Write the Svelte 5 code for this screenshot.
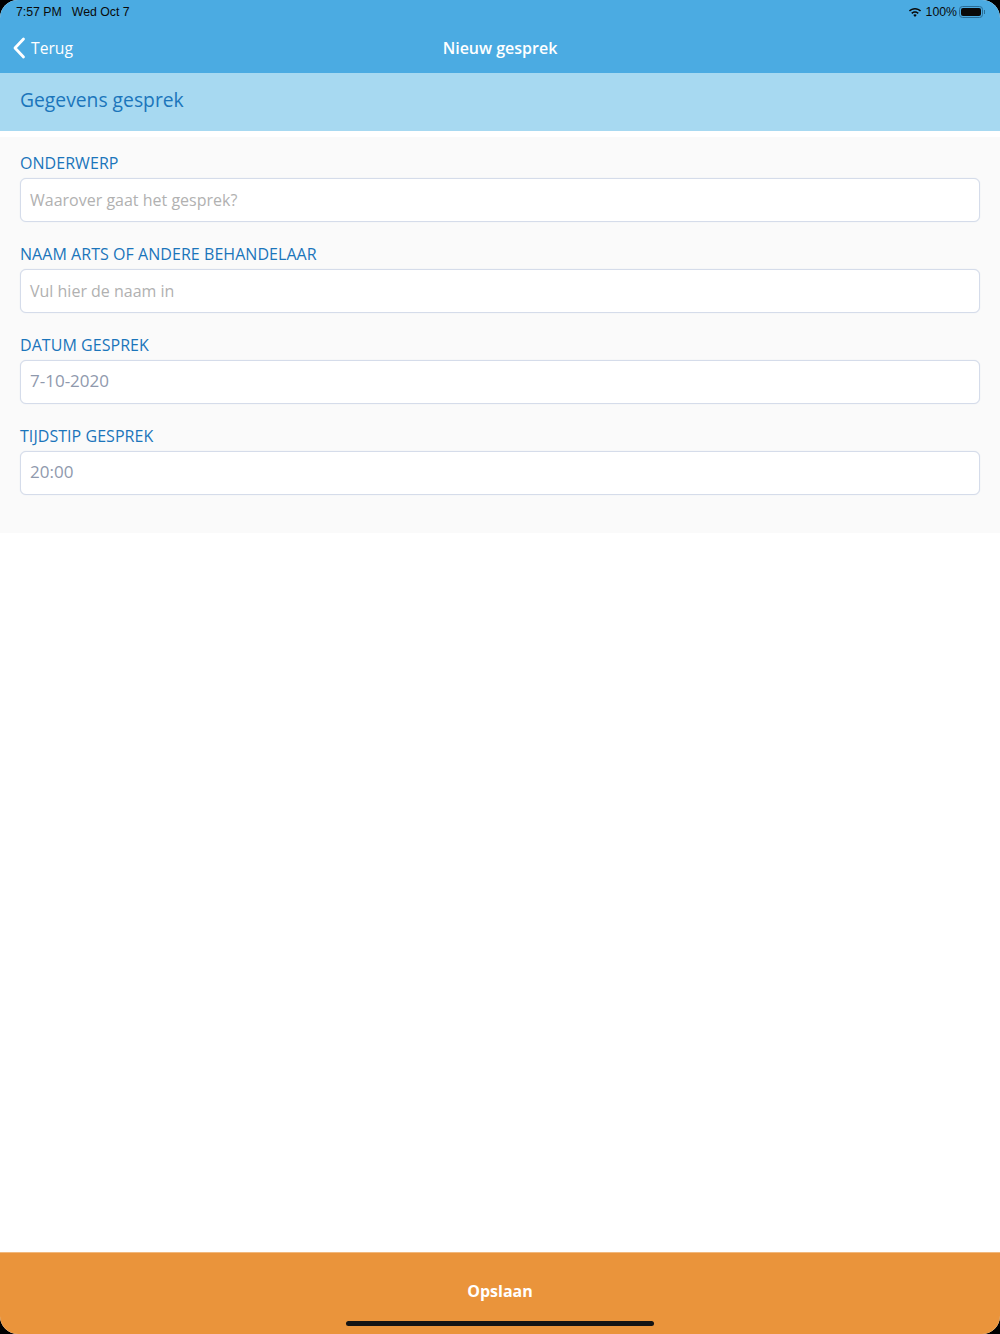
<script lang="ts">
	const fields = [
		{ label: 'ONDERWERP', value: 'Waarover gaat het gesprek?', filled: false },
		{ label: 'NAAM ARTS OF ANDERE BEHANDELAAR', value: 'Vul hier de naam in', filled: false },
		{ label: 'DATUM GESPREK', value: '7-10-2020', filled: true },
		{ label: 'TIJDSTIP GESPREK', value: '20:00', filled: true }
	];
</script>

<div class="screen">
	<header class="top">
		<div class="statusbar">
			<span class="time">7:57 PM</span>
			<span class="date">Wed Oct 7</span>
			<span class="spacer"></span>
			<svg class="wifi" width="14" height="11" viewBox="0 0 14 11" aria-hidden="true">
				<path d="M7 1C4.6 1 2.5 1.9.9 3.4L2 4.6C3.3 3.4 5.1 2.6 7 2.6s3.7.8 5 2l1.1-1.2C11.500 1.900 9.400 1 7 1z" fill="#0a0a0a" />
				<path d="M7 4.200c-1.500 0-2.800.6-3.800 1.500l1.100 1.200C5 6.200 6 5.800 7 5.800s2 .4 2.700 1.100l1.100-1.200C9.800 4.800 8.500 4.200 7 4.200z" fill="#0a0a0a" />
				<path d="M7 7.300c-.7 0-1.300.3-1.700.7L7 9.900 8.700 8C8.300 7.600 7.700 7.300 7 7.300z" fill="#0a0a0a" />
			</svg>
			<span class="pct">100%</span>
			<span class="battery"><span class="battery-fill"></span></span>
			<span class="battery-cap"></span>
		</div>
		<nav class="navbar">
			<div class="back">
				<svg width="14" height="22" viewBox="0 0 14 22" aria-hidden="true">
					<path d="M11.500 2 L3 11 L11.500 20" fill="none" stroke="#fff" stroke-width="2.800" stroke-linecap="round" stroke-linejoin="round" />
				</svg>
				<span>Terug</span>
			</div>
			<div class="title">Nieuw gesprek</div>
		</nav>
	</header>

	<div class="section-head">Gegevens gesprek</div>

	<form class="form">
		{#each fields as f}
			<div class="field">
				<div class="label">{f.label}</div>
				<div class="input" class:filled={f.filled}>{f.value}</div>
			</div>
		{/each}
	</form>

	<div class="fill"></div>

	<footer class="save">
		<span>Opslaan</span>
		<div class="home"></div>
	</footer>
</div>

<style>
	:global(body) {
		background: #000;
	}

	.screen {
		height: 1334px;
		display: flex;
		flex-direction: column;
		background: #fff;
		border-radius: 18px;
		overflow: hidden;
		font-family: 'Open Sans', 'Noto Sans', sans-serif;
	}

	.top {
		background: #4babe2;
		height: 73px;
		flex-shrink: 0;
	}

	.statusbar {
		height: 24px;
		display: flex;
		align-items: center;
		padding: 0 15px 0 16px;
		font-family: 'Liberation Sans', Arial, sans-serif;
		font-size: 12.300px;
		color: #0a0a0a;
	}

	.date { margin-left: 10px; }
	.spacer { flex: 1; }
	.wifi { margin-right: 4px; }
	.pct { font-size: 12.300px; margin-right: 2px; }

	.battery {
		width: 24px;
		height: 12px;
		box-sizing: border-box;
		border: 1px solid #2a6d96;
		border-radius: 3.500px;
		padding: 1px;
		display: flex;
	}

	.battery-fill {
		flex: 1;
		background: #0a0a0a;
		border-radius: 2px;
	}

	.battery-cap {
		width: 1px;
		height: 4px;
		margin-left: 1px;
		background: #2a6d96;
	}

	.navbar {
		height: 47px;
		display: grid;
		grid-template-columns: 1fr auto 1fr;
		align-items: center;
		color: #fff;
	}

	.back {
		display: flex;
		align-items: center;
		gap: 5px;
		padding-left: 12px;
		font-size: 15.700px;
	}

	.title {
		grid-column: 2;
		font-size: 16px;
		font-weight: 600;
	}

	.section-head {
		height: 58px;
		flex-shrink: 0;
		box-sizing: border-box;
		display: flex;
		align-items: center;
		padding: 0 0 5px 20px;
		background: #a7d9f1;
		color: #1b75bb;
		font-size: 19.300px;
	}

	.form {
		margin-top: 6px;
		padding: 14px 20px 38px;
		background: #fafafa;
		display: flex;
		flex-direction: column;
		gap: 20px;
	}

	.label {
		height: 27px;
		line-height: 24px;
		color: #1b75bb;
		font-size: 16px;
		letter-spacing: 0.05px;
	}

	.input {
		height: 44px;
		box-sizing: border-box;
		display: flex;
		align-items: center;
		padding: 0 9px 1px;
		background: #fff;
		border: 1px solid #d5dcea;
		border-radius: 6px;
		box-shadow: 0 0 1px #d5dcea;
		font-size: 16px;
		color: #b1b1b1;
	}

	.input.filled {
		padding-bottom: 3px;
		font-size: 17px;
		color: #8f99ad;
	}

	.fill { flex: 1; }

	.save {
		height: 82px;
		flex-shrink: 0;
		position: relative;
		box-sizing: border-box;
		padding-top: 26px;
		text-align: center;
		background: #ea943b;
		border-top: 1px solid #f2b87c;
		color: #fff;
		font-size: 16px;
		font-weight: 700;
		line-height: 24px;
	}

	.home {
		position: absolute;
		left: 346px;
		bottom: 8px;
		width: 308px;
		height: 5px;
		background: #141414;
		border-radius: 3px;
	}
</style>
